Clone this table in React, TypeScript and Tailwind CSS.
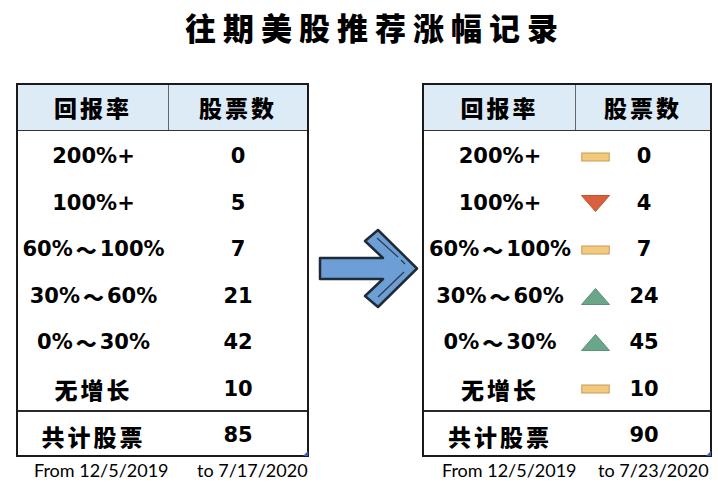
import React from "react";

const LATIN = "font-['DejaVu_Sans','Noto_Sans_CJK_SC',sans-serif]";
const CJK = "font-['Noto_Sans_CJK_SC',sans-serif]";

type Icon = "bar" | "down" | "up" | null;

function Range({ a, b }: { a: string; b?: string }) {
  if (!b) return <span>{a}</span>;
  return (
    <span className="inline-flex items-center">
      <span>{a}</span>
      <span className={`${CJK} mx-[3px] font-black`}>～</span>
      <span>{b}</span>
    </span>
  );
}

function IconShape({ kind }: { kind: Icon }) {
  if (kind === "bar")
    return (
      <svg width="29" height="10" viewBox="0 0 29 10">
        <rect x="0.75" y="1" width="27.5" height="8" fill="#f2c97d" stroke="#c79b55" strokeWidth="1" />
      </svg>
    );
  if (kind === "down")
    return (
      <svg width="29" height="17" viewBox="0 0 29 17">
        <polygon points="0.5,0.5 28.5,0.5 14.5,16.5" fill="#d9603e" stroke="#c0532f" strokeWidth="1" />
      </svg>
    );
  if (kind === "up")
    return (
      <svg width="29" height="17" viewBox="0 0 29 17">
        <polygon points="0.5,16.5 28.5,16.5 14.5,0.5" fill="#6aa68a" stroke="#5a9178" strokeWidth="1" />
      </svg>
    );
  return null;
}

type Row = { label: React.ReactNode; cjk?: boolean; value: string; icon?: Icon };

function Table({
  rows,
  total,
  firstCol,
  withIcons,
  from,
  to,
  toOffset,
  fromOffset,
  width,
}: {
  rows: Row[];
  total: string;
  firstCol: number;
  withIcons: boolean;
  from: string;
  to: string;
  toOffset: number;
  fromOffset: number;
  width: number;
}) {
  return (
    <div className="flex flex-col" style={{ width }}>
      <div className="relative flex flex-col border-2 border-[#1a1a1a] bg-white">
        <div className="flex h-[46px] border-b border-[#333] bg-[#ddebf7]">
          <div
            className={`${CJK} flex items-center justify-center border-r border-[#666] text-[23px] font-black tracking-[3px] text-black`}
            style={{ width: firstCol }}
          >
            回报率
          </div>
          <div className={`${CJK} flex flex-1 items-center justify-center text-[23px] font-black tracking-[3px] text-black`}>
            股票数
          </div>
        </div>
        {rows.map((r, i) => (
          <div key={i} className="flex h-[46.5px] items-center pt-[5px]">
            <div
              className={`${r.cjk ? `${CJK} font-black tracking-[3px] text-[23px]` : `${LATIN} font-bold text-[21px]`} flex items-center justify-center text-black`}
              style={{ width: firstCol }}
            >
              {r.label}
            </div>
            {withIcons ? (
              <div className="flex flex-1 items-center">
                <div className="ml-[5px] flex w-[29px] items-center justify-center">
                  <IconShape kind={r.icon ?? null} />
                </div>
                <div className={`${LATIN} w-[68px] text-center text-[21px] font-bold text-black`}>{r.value}</div>
              </div>
            ) : (
              <div className={`${LATIN} flex-1 text-center text-[21px] font-bold text-black`}>{r.value}</div>
            )}
          </div>
        ))}
        <div className="flex h-[45px] items-center border-t-2 border-[#2a2a2a] pt-[5px]">
          <div
            className={`${CJK} flex items-center justify-center text-[23px] font-black tracking-[3px] text-black`}
            style={{ width: firstCol }}
          >
            共计股票
          </div>
          {withIcons ? (
            <div className="flex flex-1 items-center">
              <div className="ml-[5px] w-[29px]" />
              <div className={`${LATIN} w-[68px] text-center text-[21px] font-bold text-black`}>{total}</div>
            </div>
          ) : (
            <div className={`${LATIN} flex-1 text-center text-[21px] font-bold text-black`}>{total}</div>
          )}
        </div>
        <div className="absolute bottom-[-1px] right-[-1px] h-0 w-0 border-b-[5px] border-l-[5px] border-b-[#3b5fc4] border-l-transparent" />
      </div>
      <div className="flex whitespace-nowrap font-['Lato',sans-serif] text-[18px] leading-[26px] text-black">
        <span className="shrink-0" style={{ width: toOffset, paddingLeft: fromOffset }}>
          {from}
        </span>
        <span className="shrink-0">{to}</span>
      </div>
    </div>
  );
}

function Arrow() {
  return (
    <svg width="113" height="375" viewBox="309 83 113 375" className="shrink-0">
      <path
        d="M320,258 L383,258 L365,241 L378,230 L417,268.5 L378,307 L365,296 L383,279 L320,279 Z"
        fill="#6d9fd6"
        stroke="#1f2b36"
        strokeWidth="2.5"
        strokeLinejoin="round"
      />
      <line x1="377" y1="238" x2="398" y2="257" stroke="#2b3a4a" strokeWidth="1.2" />
      <line x1="401" y1="260" x2="405" y2="264" stroke="#2b3a4a" strokeWidth="1.2" />
      <line x1="404" y1="272" x2="378" y2="297" stroke="#2b3a4a" strokeWidth="1.2" />
    </svg>
  );
}

export default function App() {
  const leftRows: Row[] = [
    { label: "200%+", value: "0" },
    { label: "100%+", value: "5" },
    { label: <Range a="60%" b="100%" />, value: "7" },
    { label: <Range a="30%" b="60%" />, value: "21" },
    { label: <Range a="0%" b="30%" />, value: "42" },
    { label: "无增长", cjk: true, value: "10" },
  ];
  const rightRows: Row[] = [
    { label: "200%+", value: "0", icon: "bar" },
    { label: "100%+", value: "4", icon: "down" },
    { label: <Range a="60%" b="100%" />, value: "7", icon: "bar" },
    { label: <Range a="30%" b="60%" />, value: "24", icon: "up" },
    { label: <Range a="0%" b="30%" />, value: "45", icon: "up" },
    { label: "无增长", cjk: true, value: "10", icon: "bar" },
  ];
  return (
    <div className="h-[484px] w-[718px] overflow-hidden bg-white">
      <div className="flex h-[83px] justify-center pl-[32px] pt-[7px]">
        <div className={`${CJK} text-[31px] font-black leading-[40px] tracking-[7px] text-black`}>往期美股推荐涨幅记录</div>
      </div>
      <div className="flex pl-[16px]">
        <Table
          rows={leftRows}
          total="85"
          firstCol={151}
          withIcons={false}
          from="From 12/5/2019"
          to="to 7/17/2020"
          fromOffset={18}
          toOffset={181}
          width={293}
        />
        <Arrow />
        <Table
          rows={rightRows}
          total="90"
          firstCol={152}
          withIcons={true}
          from="From 12/5/2019"
          to="to 7/23/2020"
          fromOffset={20}
          toOffset={176}
          width={290}
        />
      </div>
    </div>
  );
}
